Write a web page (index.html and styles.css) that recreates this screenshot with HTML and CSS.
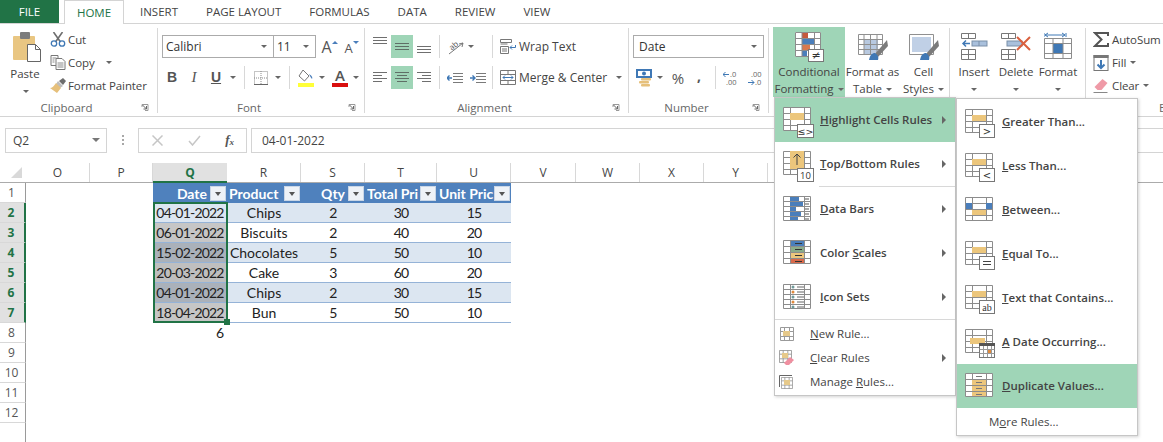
FILE: index.html
```html
<!DOCTYPE html>
<html lang="en">
<head>
<meta charset="utf-8">
<title>Conditional Formatting</title>
<link rel="stylesheet" href="styles.css">
</head>
<body>
<svg class="defs" width="0" height="0" aria-hidden="true">
  <symbol id="mgrid" viewBox="0 0 28 24">
    <path d="M.5.5h27v23H.5zM.5 6.500h27M.5 12.500h27M.5 18.500h27M7.500 0v24M21.500 0v24" fill="#fff" stroke="#8c8c8c"/>
  </symbol>
  <symbol id="rgrid" viewBox="0 0 28 25">
    <path d="M.5.5h27v24H.5zM.5 5.500h27M.5 10.500h27M.5 15.500h27M.5 20.500h27M7.500 0v25M21.500 0v25" fill="#fff" stroke="#8c8c8c"/>
  </symbol>
  <symbol id="sgrid" viewBox="0 0 14 14">
    <path d="M.5.500h13v13H.5zM.5 4.500h13M.5 9.500h13M4.500 0v14M9.500 0v14" fill="#fff" stroke="#9a9a9a"/>
  </symbol>
</svg>

<div class="tabs">
  <div class="tab file">FILE</div>
  <div class="tab home">HOME</div>
  <div class="tab">INSERT</div>
  <div class="tab">PAGE LAYOUT</div>
  <div class="tab">FORMULAS</div>
  <div class="tab">DATA</div>
  <div class="tab">REVIEW</div>
  <div class="tab">VIEW</div>
</div>

<div class="ribbon">
  <section class="group g-clip">
    <div class="body clip-body">
      <div class="paste">
        <svg width="28" height="30" viewBox="0 0 28 30"><rect x="0" y="4" width="22" height="24" rx="1" fill="#e9c682"/><rect x="7" y="0" width="10" height="7" rx="1" fill="#7c7c7c"/><path d="M14.500 12.500h8l5 5v12h-13z" fill="#fff" stroke="#666"/><path d="M22.500 12.500v5h5" fill="none" stroke="#666"/></svg>
        <span>Paste</span>
        <i class="arr"></i>
      </div>
      <div class="clip-list">
        <div class="cl"><svg width="15" height="15" viewBox="0 0 15 15"><path d="M3 0l7 10M12 0L5 10" stroke="#6e6e6e" stroke-width="1.600" fill="none"/><circle cx="3.500" cy="11.500" r="2.700" fill="none" stroke="#3f78b5" stroke-width="1.300"/><circle cx="11.500" cy="11.500" r="2.700" fill="none" stroke="#3f78b5" stroke-width="1.300"/></svg><span>Cut</span></div>
        <div class="cl"><svg width="15" height="15" viewBox="0 0 15 15"><path d="M.500.500h7v10h-7z" fill="#fff" stroke="#777"/><path d="M5.500 3.500h6l3 3v8h-9z" fill="#fff" stroke="#777"/><path d="M7 8h6M7 10h6M7 12h6M2 3h4M2 5h2M2 7h2" stroke="#8a8a8a"/></svg><span>Copy</span><i class="arr copy-arr"></i></div>
        <div class="cl"><svg width="16" height="15" viewBox="0 0 16 15"><path d="M9 3l4-3 3 3-3 4z" fill="#6d6d6d"/><path d="M8 3l5 5-3 2-4-4z" fill="#bdbdbd"/><path d="M6 5l5 5-4 5-7-5c2 0 4-2 6-5z" fill="#e6c07b"/></svg><span>Format Painter</span></div>
      </div>
    </div>
    <div class="label"><span>Clipboard</span><svg class="launch" width="7" height="7" viewBox="0 0 7 7"><path d="M.500 3V.500H6.500V6.500H3.500" fill="none" stroke="#999"/><path d="M1 1l4 4M2 5h3V2" fill="none" stroke="#666"/></svg></div>
  </section>

  <section class="group g-font">
    <div class="body stack">
      <div class="row">
        <div class="combo font-name"><span>Calibri</span><i class="arr"></i></div>
        <div class="combo font-size"><span>11</span><i class="arr"></i></div>
        <div class="grow"><span class="bigA">A</span><i class="up"></i></div>
        <div class="shrink"><span class="smallA">A</span><i class="down"></i></div>
      </div>
      <div class="row">
        <span class="ib fmt bold">B</span>
        <span class="ib fmt ital">I</span>
        <span class="ib fmt under">U</span>
        <span class="ab w12"><i class="arr"></i></span>
        <i class="sep"></i>
        <span class="ib"><svg width="14" height="14" viewBox="0 0 14 14"><path d="M.500.500h13v13H.500zM7 0v14M0 7h14" fill="none" stroke="#8a8a8a" stroke-dasharray="1 1"/><path d="M0 13.500h14" stroke="#666"/></svg></span>
        <span class="ab w12"><i class="arr"></i></span>
        <i class="sep"></i>
        <span class="ib"><svg width="16" height="18" viewBox="0 0 16 18"><path d="M5 1l6 6-4.500 5L1 7z" fill="#fff" stroke="#777"/><path d="M11 5c2 1 4 3 3 5-1-1-2-3-3-5z" fill="#4a7ebb"/><rect x="0" y="14" width="16" height="4" fill="#ffff38"/></svg></span>
        <span class="ab w10"><i class="arr"></i></span>
        <span class="ib color-a"><span>A</span></span>
        <span class="ab w10"><i class="arr"></i></span>
      </div>
    </div>
    <div class="label"><span>Font</span><svg class="launch" width="7" height="7" viewBox="0 0 7 7"><path d="M.500 3V.500H6.500V6.500H3.500" fill="none" stroke="#999"/><path d="M1 1l4 4M2 5h3V2" fill="none" stroke="#666"/></svg></div>
  </section>

  <section class="group g-align">
    <div class="body align-body">
      <div class="stack al-icons">
        <div class="row">
          <span class="ib"><svg width="14" height="8" viewBox="0 0 14 8" class="al-top"><path d="M0 .500h14M0 3.500h14M0 6.500h14" stroke="#6f6f6f"/></svg></span>
          <span class="ib on"><svg width="14" height="8" viewBox="0 0 14 8"><path d="M0 .500h14M0 3.500h14M0 6.500h14" stroke="#5f6f66"/></svg></span>
          <span class="ib"><svg width="14" height="8" viewBox="0 0 14 8" class="al-bot"><path d="M0 .500h14M0 3.500h14M0 6.500h14" stroke="#6f6f6f"/></svg></span>
        </div>
        <div class="row">
          <span class="ib"><svg width="14" height="11" viewBox="0 0 14 11"><path d="M0 .500h14M0 3.500h9M0 6.500h14M0 9.500h9" stroke="#6f6f6f"/></svg></span>
          <span class="ib on"><svg width="14" height="11" viewBox="0 0 14 11"><path d="M0 .500h14M2 3.500h10M0 6.500h14M2 9.500h10" stroke="#5f6f66"/></svg></span>
          <span class="ib"><svg width="14" height="11" viewBox="0 0 14 11"><path d="M0 .500h14M5 3.500h9M0 6.500h14M5 9.500h9" stroke="#6f6f6f"/></svg></span>
        </div>
      </div>
      <div class="stack"><div class="row"><i class="sep"></i></div><div class="row"><i class="sep"></i></div></div>
      <div class="stack al-mid">
        <div class="row">
          <svg class="orient" width="18" height="16" viewBox="0 0 18 16"><path d="M2 15L16 4" stroke="#777"/><path d="M16 4l-1 4M16 4l-4 1" stroke="#777" fill="none"/><text x="2" y="10" font-size="8" font-family="Open Sans" fill="#555" transform="rotate(-40 6 7)">ab</text></svg>
          <i class="arr orient-arr"></i>
        </div>
        <div class="row indent-row">
          <svg width="16" height="10" viewBox="0 0 16 10"><path d="M6 .500h10M6 3.500h10M6 6.500h10M6 9.500h10" stroke="#7a7a7a"/><path d="M0 5h5M2.500 2.500L0 5l2.500 2.500" stroke="#3f78b5" stroke-width="1.400" fill="none"/></svg>
          <svg width="16" height="10" viewBox="0 0 16 10"><path d="M6 .500h10M6 3.500h10M6 6.500h10M6 9.500h10" stroke="#7a7a7a"/><path d="M0 5h5M2.500 2.500L5 5 2.500 7.500" stroke="#3f78b5" stroke-width="1.400" fill="none"/></svg>
        </div>
      </div>
      <div class="stack al-sep"><div class="row"><i class="sep"></i></div><div class="row"><i class="sep"></i></div></div>
      <div class="stack">
        <div class="row wm"><svg width="16" height="15" viewBox="0 0 16 15"><path d="M.500.500h11v3H.500zM.500 7.500h8v7H.500zM2 10h5M2 12h5" fill="#fff" stroke="#777"/><path d="M.500 5h7" stroke="#777"/><path d="M15.500 6v2.500H10M12 6.500l-2 2 2 2" fill="none" stroke="#3f78b5"/></svg><span>Wrap Text</span></div>
        <div class="row wm"><svg width="16" height="15" viewBox="0 0 16 15"><path d="M.500.500h15v14H.500zM.500 4.500h15M.500 10.500h15M8 0v4M8 11v4" fill="#fff" stroke="#777"/><path d="M3 7.500h10M5 5.500l-2 2 2 2M11 5.500l2 2-2 2" fill="none" stroke="#3f78b5"/></svg><span>Merge &amp; Center</span><i class="arr merge-arr"></i></div>
      </div>
    </div>
    <div class="label"><span>Alignment</span><svg class="launch" width="7" height="7" viewBox="0 0 7 7"><path d="M.500 3V.500H6.500V6.500H3.500" fill="none" stroke="#999"/><path d="M1 1l4 4M2 5h3V2" fill="none" stroke="#666"/></svg></div>
  </section>

  <section class="group g-num">
    <div class="body stack num-body">
      <div class="row"><div class="combo num-fmt"><span>Date</span><i class="arr"></i></div></div>
      <div class="row">
        <span class="ib"><svg width="16" height="18" viewBox="0 0 16 18"><rect x="0" y="0" width="16" height="9" fill="#3f78b5"/><rect x="2" y="2" width="12" height="5" fill="#fff"/><circle cx="8" cy="4.500" r="2" fill="#3f78b5"/><rect x="5" y="9" width="10" height="2.500" rx="1" fill="#e6c07b"/><rect x="3" y="12" width="10" height="2.500" rx="1" fill="#e6c07b"/><rect x="5" y="15" width="9" height="2.500" rx="1" fill="#e6c07b"/></svg></span>
        <span class="ab w10"><i class="arr"></i></span>
        <span class="ib pct">%</span>
        <span class="ib comma">,</span>
        <i class="sep sep-num"></i>
        <span class="ib dec"><svg width="16" height="16" viewBox="0 0 16 16"><text x="7" y="7" font-size="7.500" font-family="Open Sans" fill="#666">.0</text><text x="3" y="15" font-size="7.500" font-family="Open Sans" fill="#666">.00</text><path d="M0 4.500h6M2.500 2L0 4.500 2.500 7" stroke="#3f78b5" fill="none"/></svg></span>
        <span class="ib dec"><svg width="16" height="16" viewBox="0 0 16 16"><text x="4" y="7" font-size="7.500" font-family="Open Sans" fill="#666">.00</text><text x="8" y="15" font-size="7.500" font-family="Open Sans" fill="#666">.0</text><path d="M1 12.500h6M4.500 10L7 12.500 4.500 15" stroke="#3f78b5" fill="none"/></svg></span>
      </div>
    </div>
    <div class="label"><span>Number</span><svg class="launch" width="7" height="7" viewBox="0 0 7 7"><path d="M.500 3V.500H6.500V6.500H3.500" fill="none" stroke="#999"/><path d="M1 1l4 4M2 5h3V2" fill="none" stroke="#666"/></svg></div>
  </section>

  <section class="group g-styles">
    <div class="body bigs">
      <div class="big active w72">
        <svg width="30" height="30" viewBox="0 0 30 30"><rect x="1" y="0" width="26" height="25" fill="#fff"/><rect x="8" y="0" width="6" height="6" fill="#c55a3c"/><rect x="8" y="6" width="12" height="6" fill="#4a7ebb"/><rect x="8" y="12" width="8" height="6" fill="#d9794f"/><rect x="8" y="18" width="5" height="7" fill="#4a7ebb"/><path d="M1.500.500h25v24h-25zM1.500 6.500h25M1.500 12.500h25M1.500 18.500h25M8 0v25M20.500 0v25" fill="none" stroke="#8c8c8c"/><rect x="14.500" y="17.500" width="15" height="12" fill="#fff" stroke="#777"/><text x="22" y="27" text-anchor="middle" font-size="11" font-family="DejaVu Sans" fill="#333">≠</text></svg>
        <span class="l1">Conditional</span>
        <span class="l2">Formatting<i class="arr in"></i></span>
      </div>
      <div class="big w55">
        <svg width="30" height="30" viewBox="0 0 30 30"><path d="M.500 2.500h24v20H.500z" fill="#fff"/><rect x="6" y="8" width="14" height="14" fill="#b8c9e0"/><path d="M.500 2.500h24v20H.500zM.500 7.500h24M.500 12.500h24M.500 17.500h24M6 2v21M12.500 2v21M19 2v21" fill="none" stroke="#909090"/><path d="M29 8l-12 14 3 3 10-11z" fill="#7b7b7b"/><path d="M17 21c-3 0-5 2-6 7l9 0c1-3 0-5-3-7z" fill="#3f78b5"/></svg>
        <span class="l1">Format as</span>
        <span class="l2">Table<i class="arr in"></i></span>
      </div>
      <div class="big w47">
        <svg width="30" height="30" viewBox="0 0 30 30"><path d="M.500 2.500h24v20H.500z" fill="#fff" stroke="#909090"/><path d="M3 5h19v15H3z" fill="#c0d0e6"/><path d="M29 8l-12 14 3 3 10-11z" fill="#7b7b7b"/><path d="M17 21c-3 0-5 2-6 7l9 0c1-3 0-5-3-7z" fill="#3f78b5"/></svg>
        <span class="l1">Cell</span>
        <span class="l2">Styles<i class="arr in"></i></span>
      </div>
    </div>
    <div class="label empty"></div>
  </section>

  <section class="group g-cells">
    <div class="body bigs cells-body">
      <div class="big w42">
        <svg class="ins" width="28" height="30" viewBox="0 0 28 30"><path d="M.500 1.500h14v5H.500zM7.500 1v6M.500 17.500h14v10H.500zM.500 22.500h14M7.500 17v11" fill="#fff" stroke="#777"/><rect x="11" y="9" width="15" height="5" fill="#a9c0dc" stroke="#7a8fa8"/><path d="M18 9v5" stroke="#7a8fa8"/><path d="M2 11.500h7M5 8.500l-3 3 3 3" fill="none" stroke="#3f78b5" stroke-width="1.500"/></svg>
        <span class="l1">Insert</span>
        <i class="arr big-arr"></i>
      </div>
      <div class="big w42">
        <svg width="30" height="30" viewBox="0 0 30 30"><path d="M.500 1.500h14v5H.500zM7.500 1v6M.500 17.500h14v10H.500zM.500 22.500h14M7.500 17v11" fill="#fff" stroke="#777"/><rect x="6" y="9" width="15" height="5" fill="#a9c0dc" stroke="#7a8fa8"/><path d="M16 5l13 13M29 5L16 18" stroke="#d9603f" stroke-width="2"/></svg>
        <span class="l1">Delete</span>
        <i class="arr big-arr"></i>
      </div>
      <div class="big w42">
        <svg width="28" height="30" viewBox="0 0 28 30"><path d="M0 1v4M22 1v4M1 3h20M4 1L1 3l3 2M18 1l3 2-3 2" fill="none" stroke="#3f78b5"/><path d="M.500 6.500h27v20H.500z" fill="#fff"/><rect x="9" y="11" width="10" height="10" fill="#3f78b5"/><path d="M.500 6.500h27v20H.500zM.500 11.500h27M.500 21.500h27M9 6v21M19 6v21" fill="none" stroke="#8c8c8c"/></svg>
        <span class="l1">Format</span>
        <i class="arr big-arr"></i>
      </div>
    </div>
    <div class="label empty"></div>
  </section>

  <section class="group g-edit">
    <div class="body clip-list edit-list">
      <div class="cl"><svg width="15" height="15" viewBox="0 0 15 15"><path d="M14.500 4V1H1.500L8 7.500 1.500 14h13v-3" fill="none" stroke="#555" stroke-width="2"/></svg><span>AutoSum</span></div>
      <div class="cl"><svg width="15" height="16" viewBox="0 0 15 16"><rect x=".5" y=".5" width="14" height="15" fill="#fff" stroke="#777"/><rect x="0" y="0" width="15" height="3" fill="#777"/><path d="M7.500 5v8M4 9.500l3.500 3.500L11 9.500" fill="none" stroke="#3f78b5" stroke-width="2"/></svg><span>Fill</span><i class="arr fill-arr"></i></div>
      <div class="cl"><svg width="15" height="14" viewBox="0 0 15 14"><path d="M9 0l5 4-6 7H4L1 8z" fill="#ef9aa7"/><path d="M0 13.500h14" stroke="#888"/></svg><span>Clear</span><i class="arr fill-arr"></i></div>
    </div>
    <div class="label empty"><span class="cut-label">E</span></div>
  </section>
</div>

<div class="fbar">
  <div class="namebox"><span>Q2</span><i class="arr"></i></div>
  <div class="dots"><i></i><i></i><i></i></div>
  <div class="fbtns">
    <svg width="11" height="11" viewBox="0 0 11 11"><path d="M.500.500l10 10M10.500.500l-10 10" stroke="#c6c6c6" stroke-width="1.500"/></svg>
    <svg width="13" height="11" viewBox="0 0 13 11"><path d="M1 6l3.500 4L12 1" fill="none" stroke="#c6c6c6" stroke-width="1.500"/></svg>
    <span class="fx">f<sub>x</sub></span>
  </div>
  <div class="finput">04-01-2022</div>
</div>

<div class="sheet">
  <div class="sr colhead">
    <div class="corner"><svg width="11" height="11" viewBox="0 0 11 11"><path d="M11 0v11H0z" fill="#d9d9d9"/></svg></div>
    <div class="ch c-o">O</div><div class="ch c-p">P</div><div class="ch sel c-q">Q</div><div class="ch c-r">R</div><div class="ch c-s">S</div><div class="ch c-t">T</div><div class="ch c-u">U</div><div class="ch c-v">V</div><div class="ch c-w">W</div><div class="ch c-x">X</div><div class="ch c-y">Y</div>
  </div>
  <div class="sr">
    <div class="rh">1</div><div class="c-o"></div><div class="c-p"></div>
    <div class="th c-q end"><span>Date</span><i class="fb"></i></div>
    <div class="th c-r"><span>Product</span><i class="fb"></i></div>
    <div class="th c-s end"><span>Qty</span><i class="fb"></i></div>
    <div class="th c-t"><span>Total Pri</span><i class="fb"></i></div>
    <div class="th c-u"><span>Unit Pric</span><i class="fb"></i></div>
  </div>
  <div class="sr">
    <div class="rh sel">2</div><div class="c-o"></div><div class="c-p"></div>
    <div class="td num c-q d1">04-01-2022</div><div class="td c-r band">Chips</div><div class="td num c-s band">2</div><div class="td num c-t band">30</div><div class="td num c-u band">15</div>
  </div>
  <div class="sr">
    <div class="rh sel">3</div><div class="c-o"></div><div class="c-p"></div>
    <div class="td num c-q d2">06-01-2022</div><div class="td c-r">Biscuits</div><div class="td num c-s">2</div><div class="td num c-t">40</div><div class="td num c-u">20</div>
  </div>
  <div class="sr">
    <div class="rh sel">4</div><div class="c-o"></div><div class="c-p"></div>
    <div class="td num c-q d3">15-02-2022</div><div class="td c-r band">Chocolates</div><div class="td num c-s band">5</div><div class="td num c-t band">50</div><div class="td num c-u band">10</div>
  </div>
  <div class="sr">
    <div class="rh sel">5</div><div class="c-o"></div><div class="c-p"></div>
    <div class="td num c-q d4">20-03-2022</div><div class="td c-r">Cake</div><div class="td num c-s">3</div><div class="td num c-t">60</div><div class="td num c-u">20</div>
  </div>
  <div class="sr">
    <div class="rh sel">6</div><div class="c-o"></div><div class="c-p"></div>
    <div class="td num c-q d3">04-01-2022</div><div class="td c-r band">Chips</div><div class="td num c-s band">2</div><div class="td num c-t band">30</div><div class="td num c-u band">15</div>
  </div>
  <div class="sr">
    <div class="rh sel">7</div><div class="c-o"></div><div class="c-p"></div>
    <div class="td num c-q d2">18-04-2022</div><div class="td c-r">Bun</div><div class="td num c-s">5</div><div class="td num c-t">50</div><div class="td num c-u">10</div>
  </div>
  <div class="sr">
    <div class="rh">8</div><div class="c-o"></div><div class="c-p"></div>
    <div class="plain c-q">6</div>
  </div>
  <div class="sr"><div class="rh">9</div></div>
  <div class="sr"><div class="rh">10</div></div>
  <div class="sr"><div class="rh">11</div></div>
  <div class="sr"><div class="rh">12</div></div>
  <div class="sr"><div class="rh blank"></div></div>
  <div class="selection"><i class="handle"></i></div>
</div>

<div class="menu menu-main">
  <div class="mi active">
    <svg class="mico" width="32" height="32" viewBox="0 0 32 32"><use href="#mgrid" width="28" height="24" x="0" y="0"/><rect x="7" y="6" width="14" height="7" fill="#ecc67c"/><rect x="14.500" y="17.500" width="16" height="13" fill="#fff" stroke="#777"/><text x="22.500" y="28" text-anchor="middle" font-size="9.500" font-family="DejaVu Sans" fill="#333">≤&gt;</text></svg>
    <span class="mt"><u>H</u>ighlight Cells Rules</span><i class="tri"></i>
  </div>
  <div class="mi">
    <svg class="mico" width="32" height="32" viewBox="0 0 32 32"><use href="#mgrid" width="28" height="24" x="0" y="0"/><rect x="7" y="0" width="14" height="18" fill="#ecc67c"/><path d="M14 14V3M10.500 6.500L14 3l3.500 3.500" fill="none" stroke="#444"/><rect x="14.500" y="17.500" width="16" height="13" fill="#fff" stroke="#777"/><text x="22.500" y="28" text-anchor="middle" font-size="9.500" font-family="Open Sans" fill="#333">10</text></svg>
    <span class="mt"><u>T</u>op/Bottom Rules</span><i class="tri"></i>
  </div>
  <div class="msep short"></div>
  <div class="mi">
    <svg class="mico" width="32" height="32" viewBox="0 0 32 32"><use href="#rgrid" width="28" height="25" x="0" y="0"/><rect x="7" y="1" width="9" height="4" fill="#4a7ebb"/><rect x="7" y="6" width="13" height="4" fill="#4a7ebb"/><rect x="7" y="11" width="6" height="4" fill="#4a7ebb"/><rect x="7" y="16" width="11" height="4" fill="#4a7ebb"/><rect x="7" y="21" width="8" height="3" fill="#4a7ebb"/><path d="M22 3h4M22 8h4M22 13h4M22 18h4M22 23h4" stroke="#555"/></svg>
    <span class="mt"><u>D</u>ata Bars</span><i class="tri"></i>
  </div>
  <div class="mi">
    <svg class="mico" width="32" height="32" viewBox="0 0 32 32"><use href="#mgrid" width="28" height="24" x="0" y="0"/><rect x="8" y="1" width="13" height="5" fill="#4a7ebb"/><rect x="8" y="7" width="13" height="5" fill="#8aac8a"/><rect x="8" y="13" width="13" height="5" fill="#ecc67c"/><rect x="8" y="19" width="13" height="4" fill="#d9694a"/><path d="M12 3.500h7M12 9.500h7M12 15.500h7M12 21.500h7" stroke="#333"/></svg>
    <span class="mt">Color <u>S</u>cales</span><i class="tri"></i>
  </div>
  <div class="mi">
    <svg class="mico" width="32" height="32" viewBox="0 0 32 32"><use href="#rgrid" width="28" height="25" x="0" y="0"/><path d="M14 3h7M14 8h7M14 13h7M14 18h7M14 23h7" stroke="#666"/><circle cx="10" cy="3" r="1.500" fill="#6f9a9a"/><circle cx="10" cy="8" r="1.500" fill="#e08a3c"/><circle cx="10" cy="13" r="1.500" fill="#6f9a9a"/><circle cx="10" cy="18" r="1.500" fill="#e08a3c"/><circle cx="10" cy="23" r="1.500" fill="#6f9a9a"/></svg>
    <span class="mt"><u>I</u>con Sets</span><i class="tri"></i>
  </div>
  <div class="msep"></div>
  <div class="mi small">
    <svg class="sico" width="14" height="14" viewBox="0 0 14 14"><use href="#sgrid" width="14" height="14"/><rect x="3" y="4" width="7" height="5" fill="#e6c98a"/></svg>
    <span class="mt"><u>N</u>ew Rule...</span>
  </div>
  <div class="mi small">
    <svg class="sico" width="16" height="16" viewBox="0 0 16 16"><use href="#sgrid" width="13" height="13"/><rect x="3" y="3" width="6" height="5" fill="#e6c98a"/><path d="M11 7l4 3-5 5H7l-2-2z" fill="#ef8fa0"/></svg>
    <span class="mt"><u>C</u>lear Rules</span><i class="tri"></i>
  </div>
  <div class="mi small">
    <svg class="sico" width="16" height="14" viewBox="0 0 16 14"><path d="M.500 12V.500H13" fill="none" stroke="#666"/><use href="#sgrid" x="2" y="2" width="12" height="12"/><rect x="5" y="5" width="6" height="5" fill="#e6c98a"/></svg>
    <span class="mt">Manage <u>R</u>ules...</span>
  </div>
</div>

<div class="menu menu-sub">
  <div class="mi">
    <svg class="mico" width="32" height="32" viewBox="0 0 32 32"><use href="#mgrid" width="28" height="24"/><rect x="7" y="6" width="14" height="6" fill="#ecc67c"/><rect x="14.500" y="15.500" width="15" height="13" fill="#fff" stroke="#777"/><text x="22" y="26" text-anchor="middle" font-size="10" font-family="DejaVu Sans" fill="#333">&gt;</text></svg>
    <span class="mt"><u>G</u>reater Than...</span>
  </div>
  <div class="mi">
    <svg class="mico" width="32" height="32" viewBox="0 0 32 32"><use href="#mgrid" width="28" height="24"/><rect x="7" y="6" width="14" height="6" fill="#ecc67c"/><rect x="14.500" y="15.500" width="15" height="13" fill="#fff" stroke="#777"/><text x="22" y="26" text-anchor="middle" font-size="10" font-family="DejaVu Sans" fill="#333">&lt;</text></svg>
    <span class="mt"><u>L</u>ess Than...</span>
  </div>
  <div class="mi">
    <svg class="mico" width="32" height="32" viewBox="0 0 32 32"><use href="#mgrid" width="28" height="24"/><rect x="1" y="6" width="6" height="6" fill="#4a7ebb"/><rect x="21" y="6" width="6" height="6" fill="#4a7ebb"/><rect x="7" y="13" width="14" height="5" fill="#ecc67c"/></svg>
    <span class="mt"><u>B</u>etween...</span>
  </div>
  <div class="mi">
    <svg class="mico" width="32" height="32" viewBox="0 0 32 32"><use href="#mgrid" width="28" height="24"/><rect x="7" y="6" width="14" height="6" fill="#ecc67c"/><rect x="14.500" y="15.500" width="15" height="13" fill="#fff" stroke="#777"/><path d="M18 20.500h8M18 23.500h8" stroke="#444"/></svg>
    <span class="mt"><u>E</u>qual To...</span>
  </div>
  <div class="mi">
    <svg class="mico" width="32" height="32" viewBox="0 0 32 32"><use href="#mgrid" width="28" height="24"/><rect x="7" y="6" width="14" height="6" fill="#ecc67c"/><rect x="14.500" y="15.500" width="15" height="13" fill="#fff" stroke="#777"/><text x="22" y="26" text-anchor="middle" font-size="10" font-family="Liberation Serif" fill="#333">ab</text></svg>
    <span class="mt"><u>T</u>ext that Contains...</span>
  </div>
  <div class="mi">
    <svg class="mico" width="32" height="32" viewBox="0 0 32 32"><use href="#mgrid" width="28" height="24"/><rect x="5" y="9" width="15" height="6" fill="#ecc67c"/><rect x="14.500" y="14.500" width="15" height="14" fill="#fff" stroke="#777"/><rect x="14" y="14" width="16" height="3" fill="#555"/><path d="M14.500 20.500h15M14.500 24.500h15M18.500 17v11M22.500 17v11M26.500 17v11" stroke="#999"/><rect x="23" y="21" width="3" height="3" fill="#e08a3c"/></svg>
    <span class="mt"><u>A</u> Date Occurring...</span>
  </div>
  <div class="mi active">
    <svg class="mico" width="32" height="32" viewBox="0 0 32 32"><use href="#mgrid" width="28" height="24"/><rect x="7" y="7" width="14" height="5" fill="#ecc67c"/><rect x="7" y="13" width="14" height="5" fill="#ecc67c"/><rect x="7" y="19" width="14" height="4" fill="#ecc67c"/><path d="M11 3.500h6M11 9.500h6M11 15.500h6M11 21.500h6" stroke="#777"/></svg>
    <span class="mt"><u>D</u>uplicate Values...</span>
  </div>
  <div class="mi more"><span class="mt">M<u>o</u>re Rules...</span></div>
</div>
</body>
</html>
```
FILE: styles.css
```css
* { box-sizing: border-box; }
html, body { margin: 0; padding: 0; }
body {
  width: 1163px;
  height: 442px;
  overflow: hidden;
  position: relative;
  background: #fff;
  font-family: "Open Sans", "Noto Sans", sans-serif;
  font-size: 11.5px;
  color: #444;
}
i { display: block; font-style: normal; }
.defs { position: absolute; }

/* tabs */
.tabs { display: flex; height: 24px; border-bottom: 1px solid #d4d4d4; }
.tab { padding: 0 14px; line-height: 23px; font-size: 11.5px; color: #444; white-space: nowrap; }
.tab.file { width: 59px; padding: 0; text-align: center; background: #217346; color: #fff; }
.tab.home { width: 60px; padding: 0; margin-left: 5px; height: 24px; text-align: center; color: #217346; background: #fff; border: 1px solid #d4d4d4; border-bottom: 0; }
.tab:nth-child(3) { padding-left: 16px; }

/* ribbon */
.ribbon { display: flex; height: 93px; border-bottom: 1px solid #d4d4d4; }
.group { display: flex; flex-direction: column; height: 92px; position: relative; flex: none; }
.group::after { content: ""; position: absolute; right: 0; top: 4px; bottom: 3px; width: 1px; background: #d8d8d8; }
.g-clip { width: 158px; }
.g-font { width: 207px; }
.g-align { width: 264px; }
.g-num { width: 140px; }
.g-styles { width: 181px; }
.g-cells { width: 136px; }
.g-edit { width: 77px; overflow: hidden; }
.g-edit::after { display: none; }
.body { height: 75px; flex: none; }
.label { height: 16px; display: flex; align-items: center; font-size: 11.5px; color: #666; }
.label span { flex: 1; text-align: center; }
.launch { width: 16px; padding: 0 5px 0 4px; height: 7px; box-sizing: content-box; flex: none; }

.arr { width: 0; height: 0; border: 3px solid transparent; border-top: 3px solid #666; border-bottom: 0; flex: none; }
.arr.in { display: inline-block; margin-left: 4px; vertical-align: 2px; }

.clip-body { display: flex; padding-top: 4px; }
.paste { width: 50px; display: flex; flex-direction: column; align-items: center; padding-top: 4px; padding-left: 4px; }
.paste span { line-height: 17px; margin: 3px 0 0 -4px; }
.paste .arr { margin: 8px 0 0 -2px; }
.clip-list { display: flex; flex-direction: column; }
.cl { height: 23px; display: flex; align-items: center; white-space: nowrap; }
.cl svg { width: 16px; flex: none; margin-right: 2px; }
.cl span { color: #444; letter-spacing: -.1px; }
.copy-arr { margin-left: 11px; }
.fill-arr { margin-left: 4px; }

.stack { display: flex; flex-direction: column; gap: 8px; padding-top: 11px; }
.row { display: flex; align-items: center; height: 23px; }
.combo { height: 23px; display: flex; align-items: center; justify-content: space-between; padding: 0 6px 0 3px; border: 1px solid #ababab; background: #fff; color: #333; font-size: 12px; }
.font-name { width: 111px; margin-left: 4px; border-right: 0; }
.font-size { width: 43px; }
.grow, .shrink { position: relative; width: 21px; display: flex; justify-content: center; }
.grow { margin-left: 3px; }
.shrink { margin-left: 1px; }
.bigA { font-size: 16px; line-height: 20px; color: #555; }
.smallA { font-size: 13px; line-height: 20px; color: #555; margin-top: 2px; }
.up, .down { width: 0; height: 0; border: 3px solid transparent; }
.up { border-bottom: 3px solid #4a7ebb; border-top: 0; margin-top: 4px; margin-left: 0; }
.down { border-top: 3px solid #4a7ebb; border-bottom: 0; margin-top: 5px; margin-left: 0; }

.ib { width: 22px; height: 23px; display: flex; align-items: center; justify-content: center; flex: none; font-size: 14px; color: #555; }
.fmt { line-height: 23px; }
.bold { font-weight: 700; font-family: "Liberation Sans", sans-serif; }
.ital { font-style: italic; font-family: "Liberation Serif", serif; font-size: 15px; }
.under { text-decoration: underline; font-weight: 700; font-family: "Liberation Sans", sans-serif; }
.ab { height: 23px; display: flex; align-items: center; justify-content: center; flex: none; }
.w12 { width: 12px; }
.w10 { width: 10px; }
.sep { width: 1px; height: 23px; background: #d8d8d8; margin: 0 5px; flex: none; }
.g-font .row:last-child { padding-left: 3px; }
.color-a { margin-left: 2px; }
.color-a span { font-size: 15px; line-height: 14px; height: 19px; border-bottom: 4px solid #d90f0f; width: 16px; text-align: center; color: #555; font-weight: 600; }

.align-body { display: flex; padding-left: 4px; }
.al-icons { flex: none; }
.on { background: #9fd5b7; }
.al-top { margin-bottom: 12px; }
.al-bot { margin-top: 7px; margin-left: 0; }
.al-icons + .stack .sep { margin: 0 5px 0 4px; }
.al-mid { width: 47px; flex: none; }
.al-mid .row { padding-left: 2px; }
.orient { flex: none; overflow: visible; }
.orient-arr { margin-left: 3px; }
.indent-row { gap: 7px; }
.al-sep .sep { margin: 0 7px 0 0; }
.wm { white-space: nowrap; font-size: 12px; color: #444; }
.wm svg { flex: none; margin-right: 3px; }
.merge-arr { margin-left: 9px; }

.num-body { padding-left: 4px; }
.num-fmt { width: 131px; padding-left: 5px; }
.pct { font-size: 15px; margin-left: 2px; }
.comma { width: 20px; font-weight: 700; font-size: 14px; padding-bottom: 5px; }
.sep-num { margin: 0 5px 0 6px; }
.dec { width: 20px; }
.dec + .dec { margin-left: 4px; }

.bigs { display: flex; padding-top: 3px; }
.g-styles .bigs { padding-left: 4px; }
.big { height: 70px; display: flex; flex-direction: column; align-items: center; padding-top: 5px; flex: none; color: #444; white-space: nowrap; }
.big svg { flex: none; }
.big .ins { margin-left: 2px; }
.big span { line-height: 17px; }
.big .l1 { margin-top: 1px; }
.big.active { background: #9fd5b7; }
.w72 { width: 72px; }
.w55 { width: 55px; }
.w47 { width: 47px; }
.w42 { width: 42px; }
.cells-body { padding-left: 3px; }
.big-arr { margin-top: 8px; }
.edit-list { padding: 4px 0 0 7px; }
.edit-list .cl svg { margin-right: 3px; }
.label .cut-label { text-align: left; flex: none; margin-left: 73px; color: #666; }

/* formula bar */
.fbar { display: flex; align-items: center; height: 46px; padding: 10px 0 10px 5px; }
.namebox { width: 102px; height: 25px; border: 1px solid #d4d4d4; display: flex; align-items: center; justify-content: space-between; padding: 0 6px 0 7px; color: #444; font-size: 12px; flex: none; }
.namebox .arr { border-width: 4px; border-top-width: 4px; border-bottom-width: 0; border-top-color: #777; }
.dots { width: 31px; display: flex; flex-direction: column; align-items: center; gap: 2px; flex: none; }
.dots i { width: 2px; height: 2px; background: #a8a8a8; }
.fbtns { width: 109px; height: 25px; border: 1px solid #d4d4d4; display: flex; align-items: center; justify-content: space-between; padding: 0 12px 0 13px; flex: none; }
.fx { font-family: "Liberation Serif", serif; font-style: italic; font-size: 13px; color: #555; font-weight: 700; }
.fx sub { font-size: 9px; vertical-align: -1px; }
.finput { flex: 1; height: 25px; margin-left: 4px; border: 1px solid #d4d4d4; border-right: 0; padding-left: 10px; line-height: 23px; font-size: 12px; color: #444; }

/* sheet */
.sheet { position: relative; height: 279px; overflow: hidden; font-family: Lato, "Open Sans", sans-serif; font-size: 14px; color: #222; }
.sr { display: flex; height: 20px; }
.colhead { border-bottom: 1px solid #ababab; font-family: "Open Sans", sans-serif; font-size: 12px; color: #444; }
.corner { width: 26px; flex: none; display: flex; align-items: flex-end; justify-content: flex-end; padding: 0 4px 4px 0; }
.rh { width: 26px; flex: none; border-right: 1px solid #9a9a9a; border-bottom: 1px solid #d8d8d8; text-align: center; padding-right: 2px; line-height: 20px; font-family: "Open Sans", sans-serif; font-size: 12px; color: #555; }
.rh.sel { background: #e1e1e1; color: #217346; font-weight: 700; border-right: 2px solid #217346; }
.rh.blank { border-bottom: 0; }
.c-o { width: 64px; flex: none; }
.c-p { width: 63px; flex: none; }
.c-q { width: 74px; flex: none; }
.c-r { width: 74px; flex: none; }
.c-s { width: 64px; flex: none; }
.c-t { width: 72px; flex: none; }
.c-u { width: 74px; flex: none; }
.c-v { width: 65px; flex: none; }
.c-w, .c-x, .c-y { width: 64px; flex: none; }
.ch { text-align: center; line-height: 19px; border-right: 1px solid #d8d8d8; }
.ch.sel { background: #e1e1e1; color: #217346; font-weight: 700; border-bottom: 2px solid #217346; border-right: 0; height: 20px; }
.th { display: flex; align-items: center; justify-content: space-between; background: #4f81bd; color: #fff; font-weight: 700; padding: 0 1px 0 2px; overflow: hidden; white-space: nowrap; }
.th span { overflow: hidden; flex: 1; min-width: 0; }
.th.end span { text-align: right; padding-right: 3px; }
.fb { width: 16px; height: 15px; flex: none; position: relative; background: #eef2f7; border: 1px solid #c9d6e6; }
.fb::after { content: ""; position: absolute; left: 4px; top: 5px; width: 0; height: 0; border: 3px solid transparent; border-top: 4px solid #555; border-bottom: 0; }
.td { text-align: center; line-height: 19px; border-bottom: 1px solid #95b3d7; white-space: nowrap; overflow: hidden; }
.num { letter-spacing: -.8px; }
.band { background: #dce6f1; }
.d1 { background: #dce6f1; }
.d2 { background: #c6c6c6; }
.d3 { background: #aab1ba; }
.d4 { background: #bfbfbf; }
.plain { text-align: right; padding-right: 3px; line-height: 20px; }
.selection { position: absolute; left: 153px; top: 39px; width: 75px; height: 121px; border: 2px solid #217346; }
.handle { position: absolute; right: -4px; bottom: -4px; width: 6px; height: 6px; background: #217346; }

/* menus */
.menu { position: absolute; background: #fff; border: 1px solid #c6c6c6; box-shadow: 1px 1px 3px rgba(0,0,0,.18); }
.menu-main { left: 774px; top: 97px; width: 182px; height: 299px; }
.menu-sub { left: 956px; top: 98px; width: 182px; height: 338px; padding: 1px 0 0; }
.mi { display: flex; align-items: center; height: 44px; padding-left: 8px; position: relative; white-space: nowrap; }
.mi.active { background: #9fd5b7; }
.mico { flex: none; margin: 6px 5px 0 0; }
.mt { font-size: 11.5px; font-weight: 600; color: #444; margin-bottom: 2px; }
.tri { position: absolute; right: 9px; top: 50%; margin-top: -4px; width: 0; height: 0; border: 4px solid transparent; border-left: 4px solid #666; border-right: 0; }
.msep { height: 1px; background: #d8d8d8; margin-left: 44px; }
.msep:not(.short) { margin: 0 0 2px; }
.mi.small { height: 24px; padding-left: 4px; }
.mi.small .mt { font-weight: 400; }
.sico { flex: none; width: 16px; margin-right: 15px; }
.menu-sub .mi.more { height: 28px; padding-left: 32px; }
.mi.more .mt { font-weight: 400; }
```
